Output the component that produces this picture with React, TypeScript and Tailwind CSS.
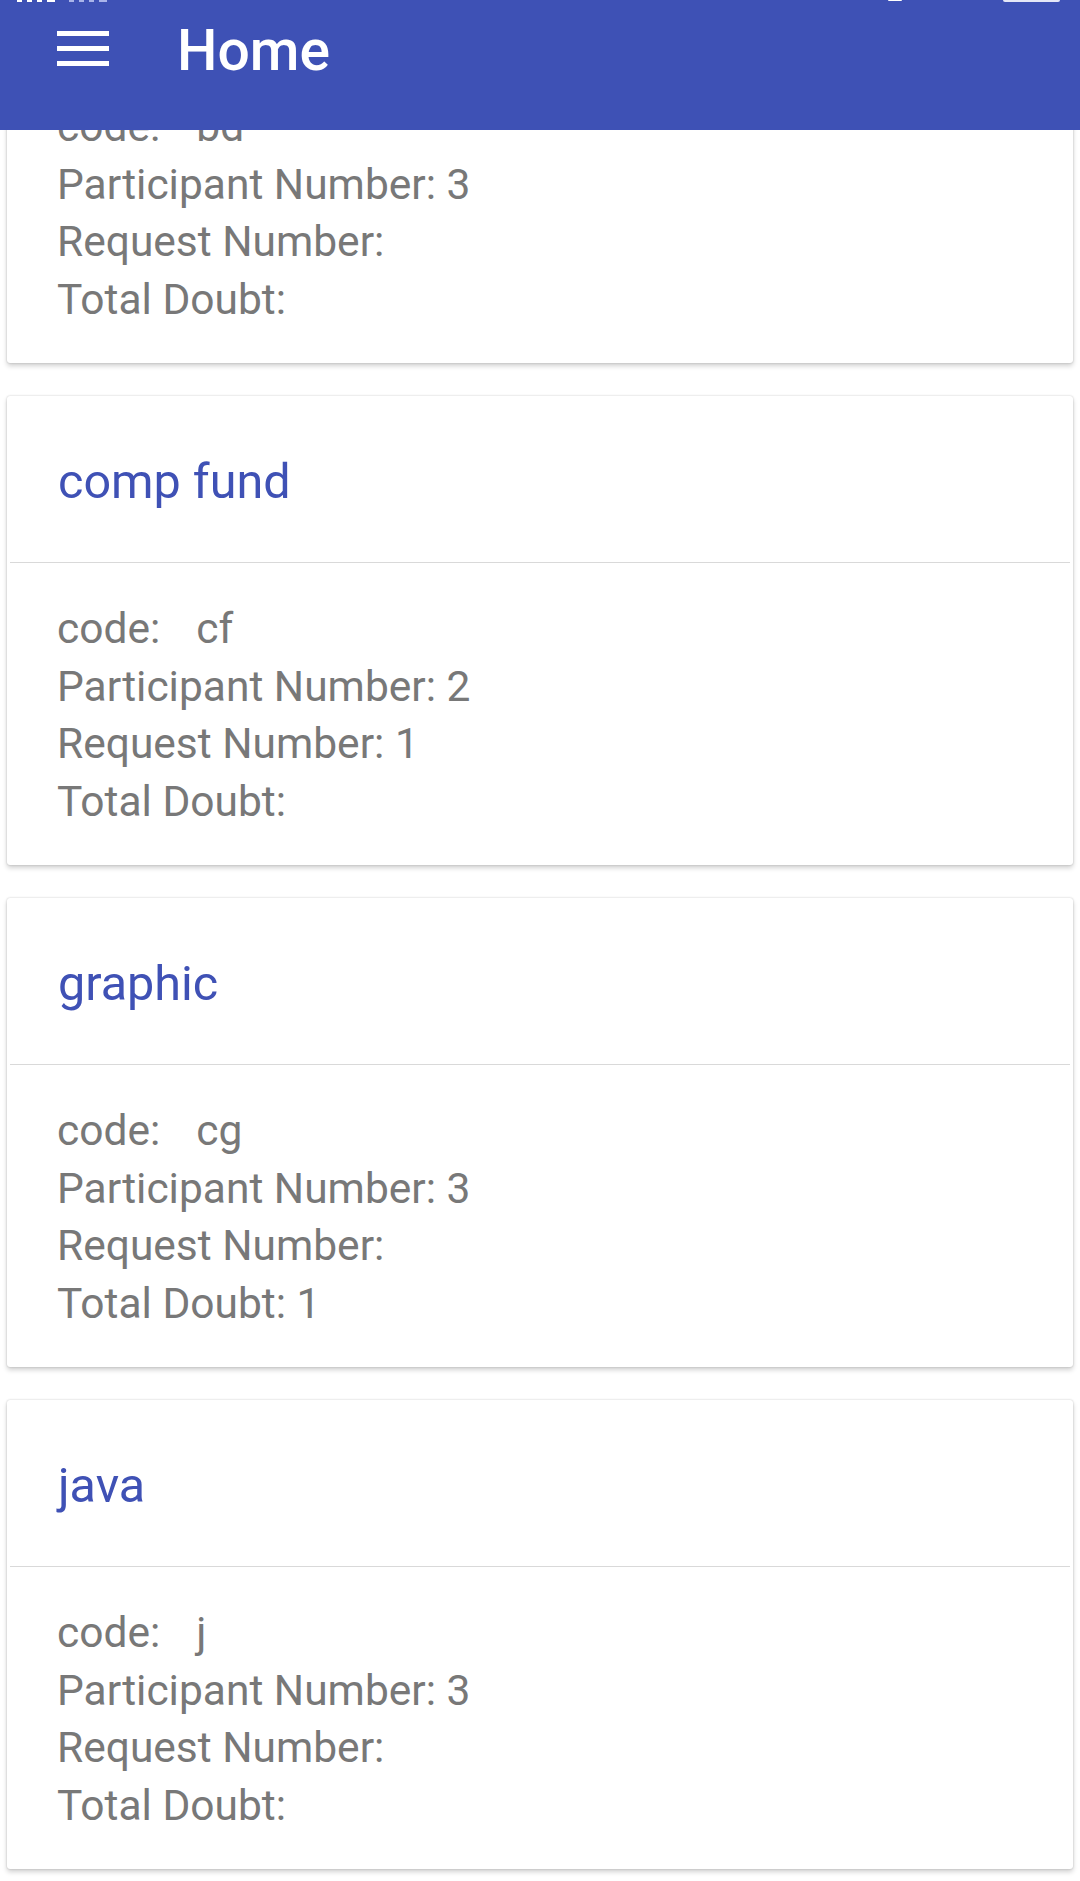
const courses = [
  { name: 'business dev', code: 'bd', participants: '3', requests: '', doubts: '' },
  { name: 'comp fund', code: 'cf', participants: '2', requests: '1', doubts: '' },
  { name: 'graphic', code: 'cg', participants: '3', requests: '', doubts: '1' },
  { name: 'java', code: 'j', participants: '3', requests: '', doubts: '' },
];

function MenuIcon() {
  return (
    <div className="flex w-[52px] flex-col gap-[10px]">
      <span className="block h-[5px] bg-white" />
      <span className="block h-[5px] bg-white" />
      <span className="block h-[5px] bg-white" />
    </div>
  );
}

function CourseCard({ course }: { course: (typeof courses)[number] }) {
  return (
    <div className="rounded-[3px] bg-white shadow-[0_0_2px_rgba(0,0,0,0.22),0_3px_5px_rgba(0,0,0,0.18)]">
      <div className="h-[166px] px-[51px] pt-[58px]">
        <h2 className="text-[48.5px] leading-[56px] text-[#3f51b5]">{course.name}</h2>
      </div>
      <div className="mx-[3px] h-px bg-[#d9d9d9]" />
      <div className="px-[50px] pb-[35px] pt-[37px] text-[42.5px] leading-[57.5px] text-[#787878]">
        <p>
          code:<span className="ml-[36px]">{course.code}</span>
        </p>
        <p>Participant Number: {course.participants}</p>
        <p>Request Number: {course.requests}</p>
        <p>Total Doubt: {course.doubts}</p>
      </div>
    </div>
  );
}

export default function App() {
  return (
    <div
      className="relative h-[1881px] w-[1080px] overflow-hidden bg-white"
      style={{ fontFamily: 'Roboto, "Noto Sans", sans-serif' }}
    >
      <header className="absolute inset-x-0 top-0 z-10 h-[130px] bg-[#3e51b5]">
        {/* status bar leftovers */}
        <div className="absolute left-[17px] top-0 flex gap-[5px]">
          <span className="h-[2px] w-[5px] bg-white" />
          <span className="h-[2px] w-[5px] bg-white" />
          <span className="h-[2px] w-[5px] bg-white" />
          <span className="h-[2px] w-[8px] bg-white" />
          <span className="ml-[9px] h-[2px] w-[5px] bg-[#aab4ea]" />
          <span className="h-[2px] w-[5px] bg-[#aab4ea]" />
          <span className="h-[2px] w-[5px] bg-[#aab4ea]" />
          <span className="h-[2px] w-[8px] bg-[#aab4ea]" />
        </div>
        <span className="absolute left-[888px] top-0 h-[1px] w-[14px] rounded-b-full bg-white" />
        <span className="absolute left-[1003px] top-0 h-[2px] w-[57px] rounded-b-[2px] bg-[#e4e7f7]" />
        <div className="flex h-[100px] items-center gap-[68px] pl-[57px]">
          <div className="-mt-[4px]">
            <MenuIcon />
          </div>
          <h1 className="text-[57px] font-medium leading-none text-white">Home</h1>
        </div>
      </header>

      <div className="-mt-[106px] flex flex-col gap-[33px] px-[7px]">
        {courses.map((c) => (
          <CourseCard key={c.code} course={c} />
        ))}
      </div>
    </div>
  );
}
